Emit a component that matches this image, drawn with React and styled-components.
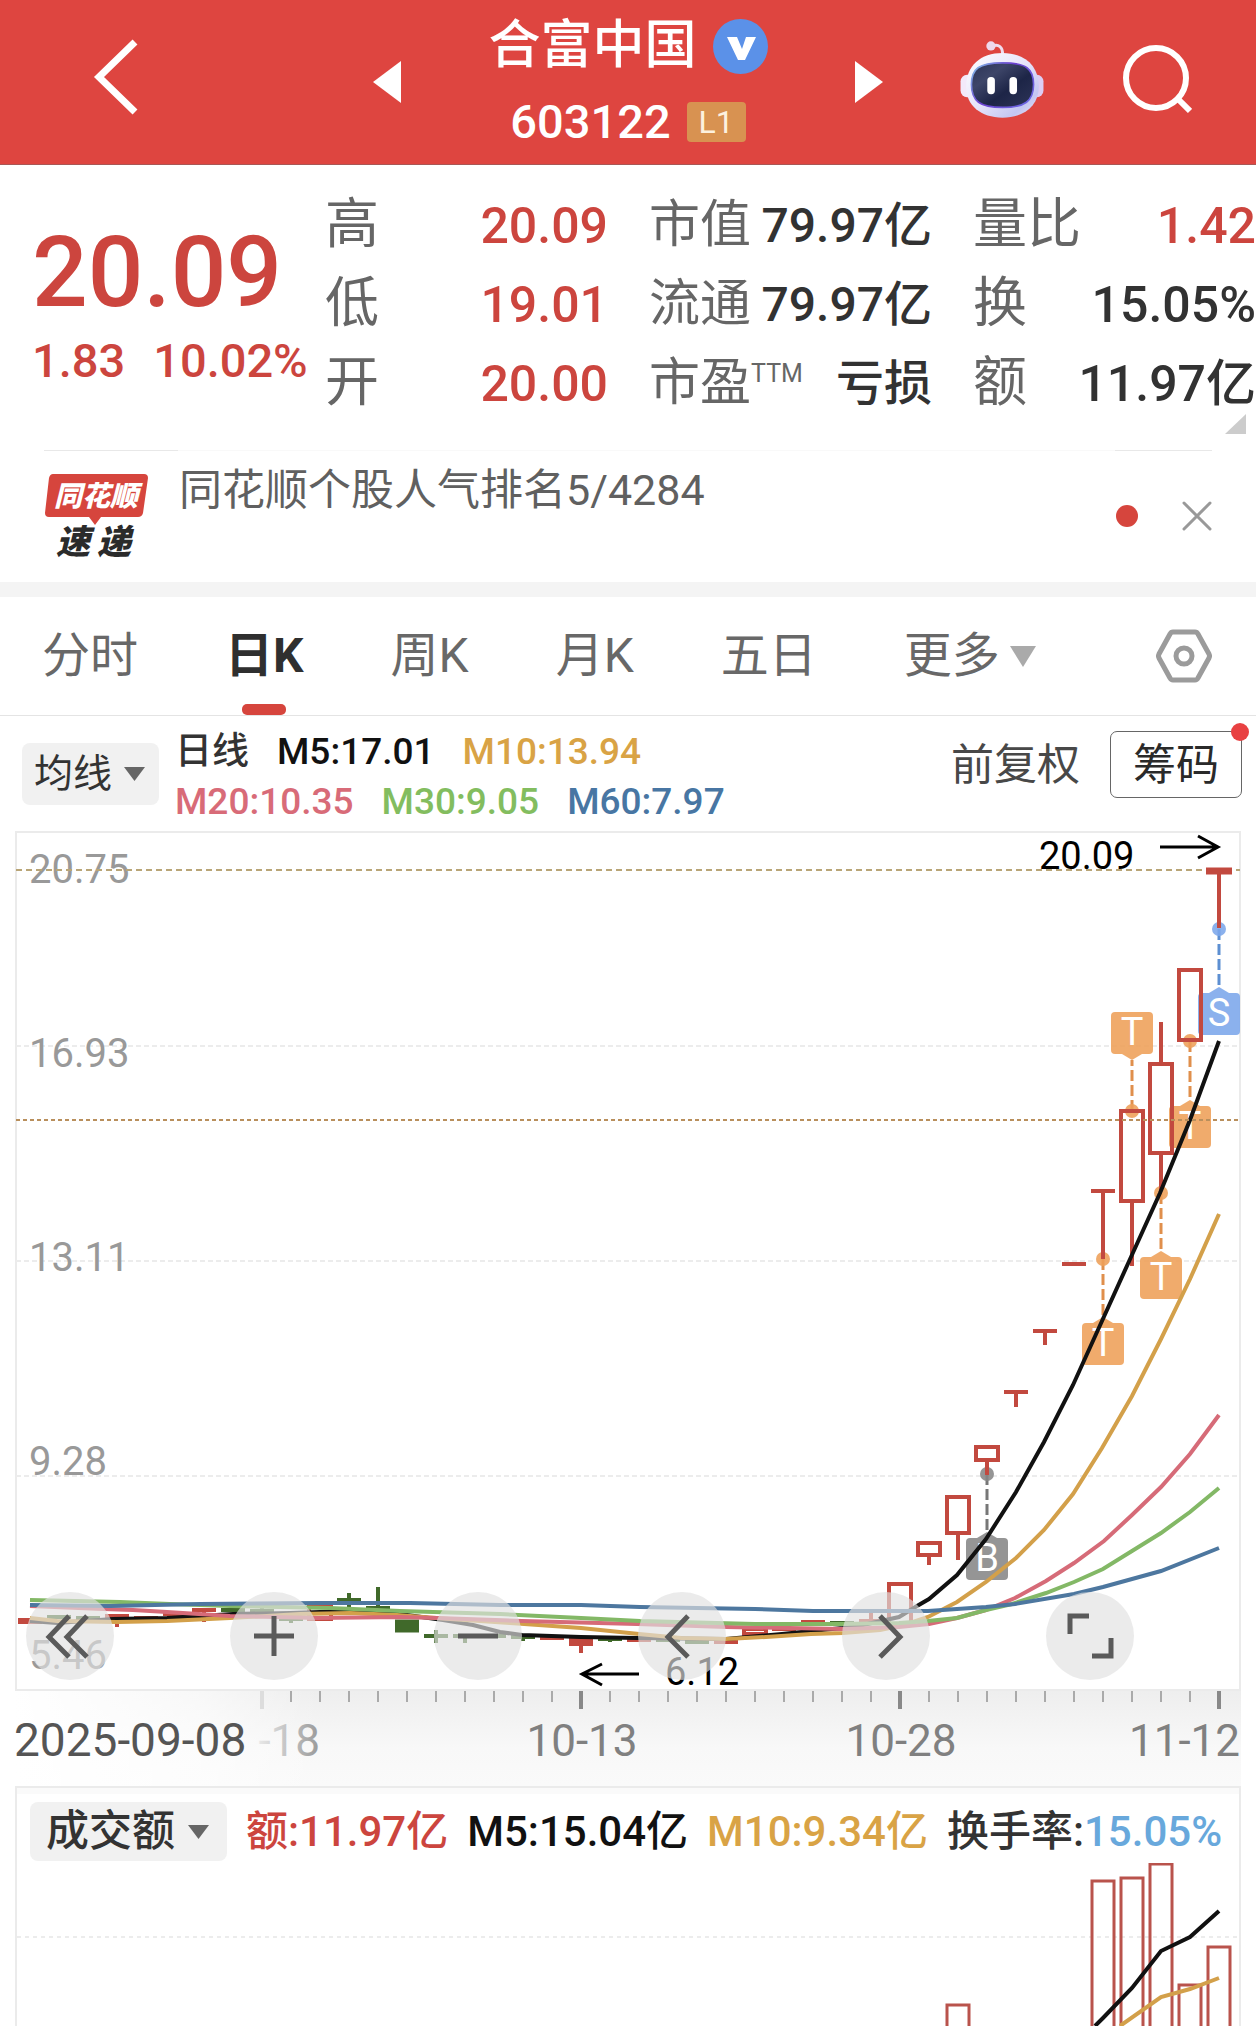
import { useState } from "react";
import styled, { createGlobalStyle } from "styled-components";

const RED = "#cc453e";
const CANDLE = "#c2493f";
const GREEN = "#40692a";
const ORANGE = "#d3a04a";

const GlobalStyle = createGlobalStyle`
  * {
    box-sizing: border-box;
  }
  body {
    margin: 0;
    background: #fff;
    color: #333;
    font-family: Roboto, "Noto Sans CJK SC", sans-serif;
  }
  button, select {
    margin: 0;
    padding: 0;
    border: 0;
    background: none;
    color: inherit;
    font: inherit;
    cursor: pointer;
  }
  svg {
    display: block;
  }
  svg text {
    font-family: Roboto, "Noto Sans CJK SC", sans-serif;
  }
  h1, p, dl, dd {
    margin: 0;
  }
`;

const Page = styled.div`
  height: 100vh;
  overflow: hidden;
`;

/* header */
const Header = styled.header`
  display: grid;
  grid-template-columns: 1fr 510px 1fr;
  align-items: center;
  height: 165px;
  background: #de4540;
  border-bottom: 1px solid #a95755;
  color: #fff;
`;

const HeaderLeft = styled.div`
  padding: 0 0 6px 92px;
`;

const HeaderRight = styled.div`
  display: flex;
  justify-content: flex-end;
  align-items: center;
  gap: 78px;
  padding: 0 64px 6px 0;
`;

const StockSwitch = styled.div`
  display: flex;
  justify-content: space-between;
  align-items: center;
`;

const Title = styled.div`
  display: flex;
  flex-direction: column;
  align-items: center;
  padding-top: 4px;
`;

const TitleRow = styled.div`
  display: flex;
  align-items: center;
  gap: 16px;
  height: 76px;
`;

const StockName = styled.h1`
  font-size: 52px;
  line-height: 76px;
  font-weight: 500;
`;

const StockCode = styled.span`
  font-size: 47px;
  line-height: 76px;
  font-weight: 500;
`;

const LevelBadge = styled.span`
  width: 59px;
  height: 40px;
  border-radius: 4px;
  background: #d89251;
  color: #fdf1df;
  font-size: 32px;
  line-height: 40px;
  text-align: center;
`;

/* quote */
const Quote = styled.section`
  position: relative;
  display: grid;
  grid-template-columns: 284px repeat(3, 1fr);
  column-gap: 41px;
  height: 285px;
`;

const PriceBlock = styled.div`
  padding: 58px 0 0 32px;
  color: ${RED};
  font-weight: 500;
  white-space: nowrap;
`;

const Price = styled.p`
  font-size: 98px;
  line-height: 100px;
`;

const Change = styled.p`
  display: flex;
  gap: 28px;
  margin-top: 8px;
  font-size: 47px;
  line-height: 60px;
`;

const Stats = styled.dl`
  padding-top: 20px;
`;

const Stat = styled.div`
  display: flex;
  justify-content: space-between;
  align-items: baseline;
  height: 79px;
  line-height: 79px;
  white-space: nowrap;
`;

const StatLabel = styled.dt`
  color: #666;
  font-size: ${(props) => (props.$compact ? 51 : 54)}px;

  sup {
    font-size: 25px;
    line-height: 25px;
  }
`;

const StatValue = styled.dd`
  color: ${(props) => (props.$up ? RED : "#323232")};
  font-size: ${(props) => (props.$compact ? 48 : 50)}px;
  font-weight: 500;
`;

const Corner = styled.i`
  position: absolute;
  right: 10px;
  bottom: 16px;
  border-left: 21px solid transparent;
  border-bottom: 20px solid #ccc;
`;

/* news */
const News = styled.section`
  display: flex;
  align-items: flex-start;
  height: 132px;
  margin: 0 44px;
  background: linear-gradient(90deg, #e8e8e8 134px, #f9f9f9 134px, #f9f9f9 calc(100% - 97px), #e8e8e8 calc(100% - 97px)) top / 100% 1px no-repeat;
`;

const NewsLogo = styled.svg`
  flex: none;
  margin: 22px 30px 0 0;
`;

const NewsText = styled.a`
  flex: 1;
  margin-top: 14px;
  color: #606060;
  font-size: 43px;
  line-height: 52px;
  text-decoration: none;
`;

const NewsActions = styled.div`
  display: flex;
  align-items: center;
  gap: 44px;
  height: 132px;
`;

const Dot = styled.i`
  width: 22px;
  height: 22px;
  border-radius: 50%;
  background: #d6453d;
`;

const Band = styled.div`
  height: 15px;
  background: #f4f4f4;
`;

/* tabs */
const Tabs = styled.nav`
  display: flex;
  align-items: center;
  gap: 87px;
  height: 119px;
  padding: 0 44px 0 42px;
  border-bottom: 1px solid #e4e4e4;
`;

const Tab = styled.button`
  position: relative;
  display: flex;
  align-items: center;
  gap: 10px;
  height: 118px;
  color: ${(props) => (props.$active ? "#2f2f2f" : "#686868")};
  font-size: 48px;
  line-height: 122px;
  font-weight: ${(props) => (props.$active ? 700 : 400)};
  white-space: nowrap;

  &::after {
    content: "";
    display: ${(props) => (props.$active ? "block" : "none")};
    position: absolute;
    left: calc(50% - 22px);
    bottom: 0;
    width: 44px;
    height: 11px;
    border-radius: 5px;
    background: #d6453d;
  }
`;

const SettingButton = styled.button`
  margin-left: auto;
`;

/* moving average bar */
const AverageBar = styled.section`
  display: flex;
  align-items: center;
  height: 115px;
  padding: 0 14px 0 22px;
`;

const Chip = styled.label`
  position: relative;
  flex: none;

  svg {
    position: absolute;
    right: ${(props) => (props.$large ? 18 : 14)}px;
    top: calc(50% - 7px);
    pointer-events: none;
  }
`;

const ChipSelect = styled.select`
  appearance: none;
  display: block;
  height: ${(props) => (props.$large ? 59 : 62)}px;
  padding: ${(props) => (props.$large ? "0 52px 0 16px" : "0 46px 0 12px")};
  border-radius: 8px;
  background: #f1f1f1;
  color: #333;
  font-size: ${(props) => (props.$large ? 43 : 39)}px;
  font-weight: ${(props) => (props.$large ? 500 : 400)};
`;

const Averages = styled.div`
  flex: 1;
  margin-left: 16px;
  padding-top: 6px;
`;

const AverageRow = styled.div`
  display: flex;
  gap: 28px;
  font-size: 37px;
  line-height: 50px;
  font-weight: 500;
  white-space: nowrap;
`;

const Value = styled.span`
  color: ${(props) => props.$color};
`;

const AverageActions = styled.div`
  display: flex;
  align-items: center;
  gap: 30px;
  padding-bottom: 18px;
`;

const PlainButton = styled.button`
  color: #484848;
  font-size: 43px;
  line-height: 66px;
`;

const ChipsButton = styled.button`
  position: relative;
  width: 132px;
  height: 67px;
  border: 1px solid #666;
  border-radius: 7px;
  color: #2a2a2a;
  font-size: 43px;
  line-height: 60px;

  &::after {
    content: "";
    position: absolute;
    top: -9px;
    right: -8px;
    width: 18px;
    height: 18px;
    border-radius: 50%;
    background: #e84142;
  }
`;

/* chart */
const ChartWrap = styled.section`
  position: relative;
  margin: 0 15px;
`;

const ChartSvg = styled.svg`
  width: 100%;
  height: auto;
`;

const Tools = styled.div`
  position: absolute;
  left: 11px;
  right: 107px;
  bottom: 106px;
  display: flex;
  justify-content: space-between;
`;

const ToolButton = styled.button`
  width: 88px;
  height: 88px;
  border-radius: 50%;
  background: rgba(225, 225, 225, 0.66);
`;

/* volume */
const Volume = styled.section`
  margin: 0 15px;
  border: 2px solid #ebebeb;
  border-bottom: 0;
  background: linear-gradient(#fafafa, #fafafa) top / 100% 6px no-repeat;
`;

const VolumeHead = styled.div`
  display: flex;
  align-items: center;
  gap: 19px;
  padding: 14px 0 2px 13px;
  font-size: 42px;
  line-height: 59px;
  font-weight: 500;
  white-space: nowrap;
`;

const Caret = ({ color, width = 21, height = 14 }) => (
  <svg width={width} height={height} viewBox="0 0 21 14" preserveAspectRatio="none" aria-hidden="true">
    <path d="M0 0H21L10.5 14Z" fill={color} />
  </svg>
);

function Robot() {
  return (
    <svg width="84" height="77" viewBox="56 56 253 233" aria-hidden="true">
      <defs>
        <linearGradient id="shell" x1="0" y1="0" x2="1" y2="1">
          <stop offset="0" stopColor="#fff" />
          <stop offset="0.5" stopColor="#e6e3fa" />
          <stop offset="0.8" stopColor="#c3c6f2" />
          <stop offset="1" stopColor="#efe4f4" />
        </linearGradient>
        <linearGradient id="face" x1="0" y1="0" x2="1" y2="1">
          <stop offset="0" stopColor="#2c3356" />
          <stop offset="0.3" stopColor="#3d4568" />
          <stop offset="0.6" stopColor="#1d2547" />
          <stop offset="1" stopColor="#2d3458" />
        </linearGradient>
        <linearGradient id="rim" x1="0" y1="0" x2="1" y2="0.6">
          <stop offset="0" stopColor="#86c8ea" />
          <stop offset="0.5" stopColor="#6b3fd0" />
          <stop offset="1" stopColor="#6b62e0" />
        </linearGradient>
      </defs>
      <rect x="57" y="158" width="42" height="68" rx="20" fill="#f3e9fa" />
      <rect x="266" y="158" width="42" height="68" rx="20" fill="#dccdf3" />
      <path d="M152 72C172 64 186 74 184 98" fill="none" stroke="#f0dcee" strokeWidth="9" />
      <circle cx="149" cy="71" r="14" fill="#eed8ec" />
      <path d="M184 92C250 92 294 130 294 194C294 252 250 288 184 288C118 288 74 252 74 194C74 130 118 92 184 92Z" fill="url(#shell)" />
      <path d="M184 122C256 122 278 140 278 188C278 238 252 257 184 257C116 257 90 238 90 188C90 140 112 122 184 122Z" fill="url(#face)" stroke="url(#rim)" strokeWidth="5" />
      <rect x="138" y="165" width="23" height="52" rx="11" fill="#fff" />
      <rect x="205" y="165" width="23" height="52" rx="11" fill="#fff" />
    </svg>
  );
}

function Logo() {
  return (
    <NewsLogo width="105" height="100" viewBox="0 0 105 100" role="img" aria-label="同花顺速递">
      <path d="M9 2H100Q104 2 104 6L99 41Q98 45 94 45H57L51 53L45 45H5Q1 45 1 41L5 6Q6 2 9 2Z" fill="#d6453d" />
      <text x="52" y="34" fontSize="28" fontWeight="900" fontStyle="italic" fill="#fff" textAnchor="middle">同花顺</text>
      <text y="82" fontSize="34" fontWeight="900" fontStyle="italic" fill="#2b2b2b">
        <tspan x="12">速</tspan>
        <tspan x="53">递</tspan>
      </text>
    </NewsLogo>
  );
}

// newest day is 0, every day is 29 wide
const dayX = (day) => 1219 - day * 29;

// box: [top, bottom], wick: [top, bottom], bar: y of a flat day
const candles = [
  { day: 0, bar: 871, wick: [871, 928], thick: 7 },
  { day: 1, box: [970, 1040] },
  { day: 2, box: [1064, 1153], wick: [1022, 1191] },
  { day: 3, box: [1111, 1201], wick: [1111, 1266] },
  { day: 4, bar: 1191, wick: [1191, 1259] },
  { day: 5, bar: 1264 },
  { day: 6, bar: 1331, wick: [1331, 1345] },
  { day: 7, bar: 1392, wick: [1392, 1407] },
  { day: 8, box: [1447, 1460], wick: [1447, 1475] },
  { day: 9, box: [1497, 1533], wick: [1497, 1560] },
  { day: 10, box: [1543, 1555], wick: [1543, 1565] },
  { day: 11, box: [1584, 1624] },
  { day: 12, bar: 1621, wick: [1611, 1621] },
  { day: 13, bar: 1623, down: true },
  { day: 14, bar: 1622 },
  { day: 15, bar: 1629 },
  { day: 16, box: [1629, 1634] },
  { day: 17, bar: 1642 },
  { day: 18, bar: 1642, down: true },
  { day: 19, bar: 1640, down: true },
  { day: 20, bar: 1640 },
  { day: 21, bar: 1639, wick: [1637, 1642], down: true },
  { day: 22, bar: 1642, wick: [1638, 1653], thick: 8 },
  { day: 23, bar: 1638 },
  { day: 24, bar: 1637, wick: [1635, 1641], down: true },
  { day: 25, bar: 1636, down: true },
  { day: 26, bar: 1636, wick: [1636, 1643], down: true },
  { day: 27, bar: 1636, wick: [1630, 1643], down: true },
  { day: 28, bar: 1626, thick: 13, down: true },
  { day: 29, bar: 1608, wick: [1587, 1615], down: true },
  { day: 30, bar: 1600, wick: [1593, 1609], down: true },
  { day: 31, box: [1606, 1619] },
  { day: 32, bar: 1619, wick: [1619, 1623], down: true },
  { day: 33, bar: 1611, wick: [1608, 1611], down: true },
  { day: 34, bar: 1610, wick: [1607, 1612], down: true },
  { day: 35, bar: 1610, wick: [1610, 1622] },
  { day: 36, bar: 1614 },
  { day: 37, bar: 1618 },
  { day: 38, bar: 1616, wick: [1616, 1627] },
  { day: 39, bar: 1618, down: true },
  { day: 40, bar: 1617, down: true },
  { day: 41, bar: 1621, thick: 6 },
];

const averages = [
  {
    color: "#111",
    points: "30,1621 57,1623 113,1619 167,1618 233,1614 290,1613 320,1612 360,1611 400,1614 443,1620 473,1625 500,1632 522,1635 581,1637 637,1638 726,1639 782,1634 811,1631 843,1628 863,1625 899,1617 917,1606 929,1599 957,1575 986,1539 1016,1492 1044,1442 1073,1385 1102,1321 1131,1257 1160,1193 1190,1120 1219,1041",
  },
  {
    color: ORANGE,
    points: "30,1618 57,1621 117,1622 167,1621 230,1618 300,1614 350,1613 397,1615 450,1619 510,1623 581,1628 639,1634 681,1638 726,1639 766,1637 811,1634 843,1633 880,1630 904,1625 928,1617 957,1602 986,1582 1016,1558 1044,1530 1073,1494 1102,1448 1132,1396 1161,1339 1190,1279 1219,1214",
  },
  {
    color: "#d66b78",
    points: "30,1606 103,1609 133,1610 167,1612 230,1616 317,1618 400,1617 437,1618 522,1621 637,1624 726,1627 842,1629 899,1627 929,1624 957,1618 986,1610 1015,1598 1046,1581 1074,1563 1104,1541 1132,1515 1161,1487 1190,1454 1219,1415",
  },
  {
    color: "#83b866",
    points: "30,1600 120,1602 170,1604 230,1606 330,1608 400,1611 500,1614 581,1618 640,1621 755,1624 842,1624 899,1623 928,1621 957,1618 986,1610 1012,1604 1046,1593 1074,1582 1103,1569 1132,1551 1161,1533 1190,1512 1219,1488",
  },
  {
    color: "#4d779f",
    points: "30,1605 110,1606 200,1604 320,1603 410,1603 500,1605 581,1605 640,1607 697,1608 755,1609 813,1611 899,1611 928,1611 957,1609 986,1607 1015,1604 1074,1594 1103,1587 1161,1571 1219,1548",
  },
];

// trade marks, dot is the y on the candle and box the top of the tag
const marks = [
  { day: 0, text: "S", dot: 929, box: 993, color: "#7ba6ea", line: "#5d8fd2" },
  { day: 1, text: "T", dot: 1041, box: 1106, color: "#ee9f58", line: "#e08f4c" },
  { day: 2, text: "T", dot: 1193, box: 1257, color: "#ee9f58", line: "#e08f4c" },
  { day: 3, text: "T", dot: 1111, box: 1012, color: "#ee9f58", line: "#e08f4c", above: true },
  { day: 4, text: "T", dot: 1259, box: 1323, color: "#ee9f58", line: "#e08f4c" },
  { day: 8, text: "B", dot: 1474, box: 1538, color: "#868686", line: "#777" },
];

const priceLabels = [
  ["20.75", 883],
  ["16.93", 1067],
  ["13.11", 1271],
  ["9.28", 1475],
  ["5.46", 1669],
];

function Candle({ day, box, wick, bar, thick = 4, down }) {
  const x = dayX(day);
  const color = down ? GREEN : CANDLE;
  const half = thick === 7 ? 13 : 12;
  return (
    <g stroke={color} strokeWidth="4" fill="none">
      {box && <rect x={x - 11} y={box[0]} width="22" height={box[1] - box[0]} />}
      {box && wick && <path d={`M${x} ${wick[0]}V${box[0]}M${x} ${box[1]}V${wick[1]}`} />}
      {!box && wick && <path d={`M${x} ${wick[0]}V${wick[1]}`} />}
      {bar && <path d={`M${x - half} ${bar}H${x + half}`} strokeWidth={thick} />}
    </g>
  );
}

function Mark({ day, text, dot, box, color, line, above }) {
  const x = dayX(day);
  const tip = above ? box + 48 : box - 6;
  const edge = above ? box + 42 : box;
  return (
    <g>
      <path d={`M${x} ${dot}V${tip}`} stroke={line} strokeWidth="3" strokeDasharray="11 4" />
      <g fill={color} fillOpacity="0.88">
        <circle cx={x} cy={dot} r="7" />
        <rect x={x - 21} y={box} width="42" height="42" rx="4" />
        <path d={`M${x - 10} ${edge}L${x} ${tip}L${x + 10} ${edge}Z`} />
      </g>
      <text x={x} y={box + 33} fontSize="38" fill="#fff" textAnchor="middle">{text}</text>
    </g>
  );
}

function KChart() {
  const ticks = Array.from({ length: 34 }, (_, i) => i);
  return (
    <ChartSvg viewBox="15 831 1226 955" role="img" aria-label="日K线图">
      <defs>
        <linearGradient id="axisBg" x1="0" y1="0" x2="0" y2="1">
          <stop offset="0" stopColor="#eeeeee" />
          <stop offset="0.6" stopColor="#f8f8f8" />
          <stop offset="1" stopColor="#fafafa" />
        </linearGradient>
        <linearGradient id="axisFade" x1="0" y1="0" x2="1" y2="0">
          <stop offset="0" stopColor="#fff" />
          <stop offset="0.6" stopColor="#fff" stopOpacity="0.6" />
          <stop offset="1" stopColor="#fff" stopOpacity="0" />
        </linearGradient>
        <linearGradient id="dateFade" x1="0" y1="0" x2="1" y2="0">
          <stop offset="0" stopColor="#e8e8e8" />
          <stop offset="1" stopColor="#999" />
        </linearGradient>
        <clipPath id="plot">
          <rect x="16" y="831" width="1225" height="860" />
        </clipPath>
      </defs>

      <rect x="15" y="1691" width="1226" height="95" fill="url(#axisBg)" />
      <rect x="15" y="1691" width="305" height="95" fill="url(#axisFade)" />
      <rect x="16" y="832" width="1224" height="858" fill="none" stroke="#ebebeb" strokeWidth="2" />
      {[1046, 1261, 1476].map((y) => (
        <path key={y} d={`M16 ${y}H1240`} stroke="#ececec" strokeWidth="2" strokeDasharray="5 3" />
      ))}
      {priceLabels.map(([label, y]) => (
        <text key={label} x="29" y={y} fontSize="40" fill="#999">{label}</text>
      ))}
      <path d="M16 870H1240" stroke="#b9a577" strokeWidth="2" strokeDasharray="6 4" />

      {marks.map((mark) => <Mark key={mark.day} {...mark} />)}
      <g clipPath="url(#plot)">
        {candles.map((candle) => <Candle key={candle.day} {...candle} />)}
      </g>
      {averages.map((line) => (
        <polyline key={line.color} points={line.points} fill="none" stroke={line.color} strokeWidth="4" />
      ))}
      <path d="M16 1120H1240" stroke="#b98f5c" strokeWidth="2" strokeDasharray="4 3" />

      <text x="1039" y="869" fontSize="38" fill="#000">20.09</text>
      <text x="665" y="1685" fontSize="38" fill="#000">6.12</text>
      <g fill="none" stroke="#000" strokeWidth="3">
        <path d="M1160 847H1218M1198 836L1218 847L1198 858" />
        <path d="M639 1674H582M602 1664L582 1674L602 1685" />
      </g>

      {ticks.map((i) => {
        const big = i % 11 === 0;
        return (
          <path
            key={i}
            d={`M${dayX(i)} 1691V${big ? 1709 : 1702}`}
            stroke={i === 33 ? "#ddd" : big ? "#888" : "#aaa"}
            strokeWidth={big ? 4 : 2}
          />
        );
      })}
      <g fontSize="44" fill="#808080">
        <text x="14" y="1756" fontSize="46" fill="#555">2025-09-08</text>
        <text x="320" y="1756" textAnchor="end" fill="url(#dateFade)">-18</text>
        <text x="582" y="1756" textAnchor="middle">10-13</text>
        <text x="901" y="1756" textAnchor="middle">10-28</text>
        <text x="1240" y="1756" textAnchor="end">11-12</text>
      </g>
    </ChartSvg>
  );
}

// [day, top of the bar]
const volumes = [
  [0, 1947],
  [1, 1985],
  [2, 1864],
  [3, 1878],
  [4, 1881],
  [9, 2005],
];

function VolumeChart() {
  return (
    <ChartSvg viewBox="17 1863 1222 163" role="img" aria-label="成交额">
      <path d="M17 1937H1239" stroke="#ececec" strokeWidth="2" strokeDasharray="4 4" />
      {volumes.map(([day, top]) => (
        <rect key={day} x={dayX(day) - 11} y={top} width="22" height="220" fill="none" stroke="#b9534c" strokeWidth="3" />
      ))}
      <polyline points="1120,2026 1161,1997 1190,1989 1219,1978" fill="none" stroke={ORANGE} strokeWidth="4" />
      <polyline points="1095,2026 1103,2018 1132,1988 1161,1951 1190,1937 1219,1911" fill="none" stroke="#111" strokeWidth="4" />
    </ChartSvg>
  );
}

const stats = [
  [
    { label: "高", value: "20.09", up: true },
    { label: "低", value: "19.01", up: true },
    { label: "开", value: "20.00", up: true },
  ],
  [
    { label: "市值", value: "79.97亿" },
    { label: "流通", value: "79.97亿" },
    { label: "市盈", sup: "TTM", value: "亏损" },
  ],
  [
    { label: "量比", value: "1.42", up: true },
    { label: "换", value: "15.05%" },
    { label: "额", value: "11.97亿" },
  ],
];

const tabs = ["分时", "日K", "周K", "月K", "五日", "更多"];

const tools = [
  { name: "最早", path: "M43 24L23 45L43 65M61 24L41 45L61 65" },
  { name: "放大", path: "M24 44H64M44 24V64" },
  { name: "缩小", path: "M24 44H64" },
  { name: "向左", path: "M50 24L30 45L50 65" },
  { name: "向右", path: "M38 24L58 45L38 65" },
  { name: "全屏", path: "M24 42V24H43M65 46V64H46" },
];

function App() {
  const [tab, setTab] = useState("日K");
  const [newsOpen, setNewsOpen] = useState(true);

  return (
    <Page>
      <GlobalStyle />
      <Header>
        <HeaderLeft>
          <button aria-label="返回">
            <svg width="48" height="78" viewBox="0 0 48 78">
              <path d="M43 4L7 39L43 74" fill="none" stroke="#fff" strokeWidth="7" />
            </svg>
          </button>
        </HeaderLeft>
        <StockSwitch>
          <button aria-label="上一只">
            <svg width="28" height="42" viewBox="0 0 28 42"><path d="M28 0V42L0 21Z" fill="#fff" /></svg>
          </button>
          <Title>
            <TitleRow>
              <StockName>合富中国</StockName>
              <svg width="55" height="55" viewBox="0 0 55 55" aria-hidden="true">
                <circle cx="27.5" cy="27.5" r="27.5" fill="#5b91e8" />
                <path d="M14 18H24L29 30L33 18H43L32 41H25Z" fill="#fff" />
              </svg>
            </TitleRow>
            <TitleRow>
              <StockCode>603122</StockCode>
              <LevelBadge>L1</LevelBadge>
            </TitleRow>
          </Title>
          <button aria-label="下一只">
            <svg width="28" height="42" viewBox="0 0 28 42"><path d="M0 0V42L28 21Z" fill="#fff" /></svg>
          </button>
        </StockSwitch>
        <HeaderRight>
          <button aria-label="智能助手"><Robot /></button>
          <button aria-label="搜索">
            <svg width="70" height="70" viewBox="0 0 70 70">
              <circle cx="34" cy="34" r="30" fill="none" stroke="#fff" strokeWidth="6" />
              <path d="M56 55L68 67" stroke="#fff" strokeWidth="6" />
            </svg>
          </button>
        </HeaderRight>
      </Header>

      <Quote>
        <PriceBlock>
          <Price>20.09</Price>
          <Change>
            <span>1.83</span>
            <span>10.02%</span>
          </Change>
        </PriceBlock>
        {stats.map((group, i) => (
          <Stats key={i}>
            {group.map((item) => (
              <Stat key={item.label}>
                <StatLabel $compact={i === 1}>
                  {item.label}
                  {item.sup && <sup>{item.sup}</sup>}
                </StatLabel>
                <StatValue $compact={i === 1} $up={item.up}>{item.value}</StatValue>
              </Stat>
            ))}
          </Stats>
        ))}
        <Corner />
      </Quote>

      {newsOpen && (
        <News>
          <Logo />
          <NewsText href="#news">同花顺个股人气排名5/4284</NewsText>
          <NewsActions>
            <Dot />
            <button aria-label="关闭" onClick={() => setNewsOpen(false)}>
              <svg width="30" height="30" viewBox="0 0 30 30">
                <path d="M2 2L28 28M28 2L2 28" stroke="#999" strokeWidth="3" strokeLinecap="round" />
              </svg>
            </button>
          </NewsActions>
        </News>
      )}
      <Band />

      <Tabs>
        {tabs.map((name) => (
          <Tab key={name} $active={tab === name} onClick={() => setTab(name)}>
            {name}
            {name === "更多" && <Caret color="#aaa" width={26} height={21} />}
          </Tab>
        ))}
        <SettingButton aria-label="设置">
          <svg width="56" height="54" viewBox="0 0 56 54">
            <path d="M17 3H39Q41 3 42 5L53 25Q54 27 53 29L42 49Q41 51 39 51H17Q15 51 14 49L3 29Q2 27 3 25L14 5Q15 3 17 3Z" fill="none" stroke="#9b9b9b" strokeWidth="5" />
            <circle cx="28" cy="27" r="8" fill="none" stroke="#9b9b9b" strokeWidth="5" />
          </svg>
        </SettingButton>
      </Tabs>

      <AverageBar>
        <Chip>
          <ChipSelect aria-label="主图指标">
            <option>均线</option>
          </ChipSelect>
          <Caret color="#666" />
        </Chip>
        <Averages>
          <AverageRow>
            <Value $color="#333">日线</Value>
            <Value $color="#111">M5:17.01</Value>
            <Value $color="#d9a345">M10:13.94</Value>
          </AverageRow>
          <AverageRow>
            <Value $color="#d86b78">M20:10.35</Value>
            <Value $color="#83bd5f">M30:9.05</Value>
            <Value $color="#4876a3">M60:7.97</Value>
          </AverageRow>
        </Averages>
        <AverageActions>
          <PlainButton>前复权</PlainButton>
          <ChipsButton>筹码</ChipsButton>
        </AverageActions>
      </AverageBar>

      <ChartWrap>
        <KChart />
        <Tools>
          {tools.map((tool) => (
            <ToolButton key={tool.name} aria-label={tool.name}>
              <svg width="88" height="88" viewBox="0 0 88 88">
                <path d={tool.path} fill="none" stroke="#5a5a5a" strokeWidth="5" />
              </svg>
            </ToolButton>
          ))}
        </Tools>
      </ChartWrap>

      <Volume>
        <VolumeHead>
          <Chip $large>
            <ChipSelect $large aria-label="副图指标">
              <option>成交额</option>
            </ChipSelect>
            <Caret color="#666" />
          </Chip>
          <Value $color={RED}>额:11.97亿</Value>
          <Value $color="#111">M5:15.04亿</Value>
          <Value $color="#d9a345">M10:9.34亿</Value>
          <span>
            换手率:<Value $color="#68a8dc">15.05%</Value>
          </span>
        </VolumeHead>
        <VolumeChart />
      </Volume>
    </Page>
  );
}

export default App;
